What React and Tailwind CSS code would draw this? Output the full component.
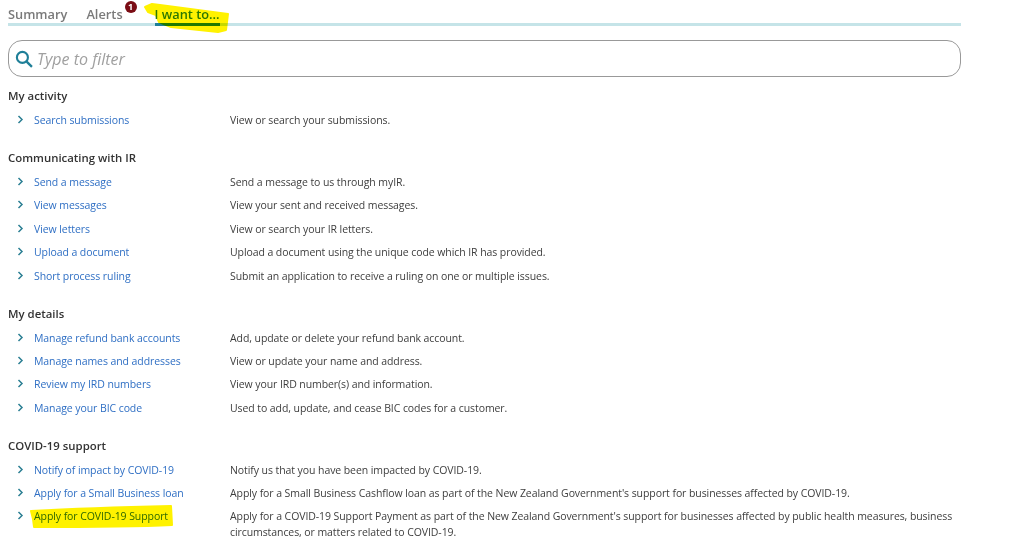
import React from 'react';

const sections = [
  {
    title: 'My activity',
    rows: [['Search submissions', 'View or search your submissions.']],
  },
  {
    title: 'Communicating with IR',
    rows: [
      ['Send a message', 'Send a message to us through myIR.'],
      ['View messages', 'View your sent and received messages.'],
      ['View letters', 'View or search your IR letters.'],
      ['Upload a document', 'Upload a document using the unique code which IR has provided.'],
      ['Short process ruling', 'Submit an application to receive a ruling on one or multiple issues.'],
    ],
  },
  {
    title: 'My details',
    rows: [
      ['Manage refund bank accounts', 'Add, update or delete your refund bank account.'],
      ['Manage names and addresses', 'View or update your name and address.'],
      ['Review my IRD numbers', 'View your IRD number(s) and information.'],
      ['Manage your BIC code', 'Used to add, update, and cease BIC codes for a customer.'],
    ],
  },
  {
    title: 'COVID-19 support',
    rows: [
      ['Notify of impact by COVID-19', 'Notify us that you have been impacted by COVID-19.'],
      ['Apply for a Small Business loan', "Apply for a Small Business Cashflow loan as part of the New Zealand Government's support for businesses affected by COVID-19."],
      ['Apply for COVID-19 Support', "Apply for a COVID-19 Support Payment as part of the New Zealand Government's support for businesses affected by public health measures, business circumstances, or matters related to COVID-19.", true],
    ],
  },
];

const Chevron = () => (
  <svg width="7" height="9" viewBox="0 0 7 9" fill="none" className="shrink-0 mt-[3px]">
    <path d="M1.5 1 L5 4.5 L1.5 8" stroke="#2b7f93" strokeWidth="1.5" />
  </svg>
);

const Row = ({ label, text, marked }) => (
  <div className="flex min-h-[23.4px] pl-[9px] text-[10.5px] leading-[16px] tracking-[-0.08px]">
    <div className="flex w-[213px] shrink-0 gap-[10px]">
      <Chevron />
      <a className="relative text-[#2f6fc4]">
        {label}
        {marked && (
          <svg width="146" height="26" viewBox="0 0 146 26" className="absolute left-[-5px] top-[-5px] mix-blend-multiply">
            <path d="M2 8 C40 6 100 4 142 3 L143 22 C100 24 50 24 5 24 L4 16 Z" fill="#fff200" stroke="#fff200" strokeWidth="2" strokeLinejoin="round" />
          </svg>
        )}
      </a>
    </div>
    <p className="text-[#3d3d3d] w-[730px]">{text}</p>
  </div>
);

const App = () => (
  <div className="w-[1024px] h-[555px] overflow-hidden bg-white font-['Open_Sans','Noto_Sans',sans-serif]">
    <div className="w-[953px] ml-2 pt-[4px]">
      <div className="flex h-[22px] border-b-[3px] border-[#c5e4e8] text-[12.8px] leading-[20px]">
        <span className="text-[#7a7a7a] font-semibold">Summary</span>
        <span className="relative ml-[19px] text-[#7a7a7a] font-semibold">
          Alerts
          <span className="absolute right-[-14px] top-[-3px] flex h-[12px] w-[12px] items-center justify-center rounded-full bg-[#7a0c14] text-[9px] font-bold text-white">
            1
          </span>
        </span>
        <span className="relative ml-[32px] h-[22px] border-b-[3px] border-[#1f7f98] text-[#2c7f3a] font-semibold">
          I want to...
          <svg width="88" height="32" viewBox="0 0 88 32" className="absolute left-[-12px] top-[-2px] mix-blend-multiply">
            <path d="M2 5 L9 2 L17 3 L85 12 L83 28 L75 30 L28 25 L16 20 L13 13 L5 10 Z" fill="#fff200" stroke="#fff200" strokeWidth="2" strokeLinejoin="round" />
          </svg>
        </span>
      </div>

      <div className="mt-[14px] flex h-[37px] items-center gap-[4px] rounded-[14px] border border-[#999999] pl-[6px]">
        <svg width="18" height="18" viewBox="0 0 17 17" fill="none">
          <circle cx="7" cy="7" r="5.2" stroke="#1f7f98" strokeWidth="2" />
          <path d="M11 11 L16 16" stroke="#1f7f98" strokeWidth="2.2" />
        </svg>
        <span className="text-[16px] italic text-[#a0a0a0]">Type to filter</span>
      </div>

      <div className="mt-[11px] flex flex-col gap-[14.6px]">
        {sections.map((s) => (
          <section key={s.title}>
            <h3 className="h-[20px] text-[11.4px] leading-[16px] font-semibold text-[#333333]">{s.title}</h3>
            <div className="mt-[4px]">
              {s.rows.map(([label, text, marked]) => (
                <Row key={label} label={label} text={text} marked={marked} />
              ))}
            </div>
          </section>
        ))}
      </div>
    </div>
  </div>
);

export default App;
